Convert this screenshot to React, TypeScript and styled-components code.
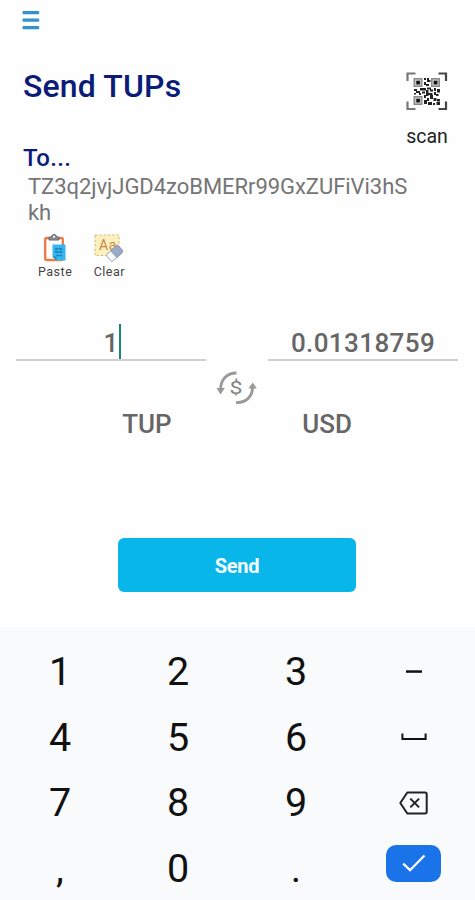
import React from "react";
import styled, { createGlobalStyle } from "styled-components";

const GlobalStyle = createGlobalStyle`
  *, *::before, *::after { box-sizing: border-box; }
  body { margin: 0; background: #fefefe; font-family: Roboto, "Liberation Sans", sans-serif; }
  button { border: 0; padding: 0; background: none; font: inherit; color: inherit; }
  svg { display: block; flex: none; }
`;

const Screen = styled.main`
  display: flex;
  flex-direction: column;
  width: 475px;
  height: 900px;
  overflow: hidden;
  background: #fefefe;
`;

const TopBar = styled.nav`
  height: 67px;
  padding: 10px 0 0 22px;
`;

const Header = styled.header`
  display: flex;
  justify-content: space-between;
  height: 107px;
  padding: 0 27px 0 23px;
`;

const Title = styled.h1`
  margin: 0;
  font-size: 32px;
  font-weight: 500;
  line-height: 38px;
  letter-spacing: 0.15px;
  color: #0b1c78;
`;

const Recipient = styled.h2`
  margin: 38px 0 0;
  font-size: 24px;
  font-weight: 500;
  line-height: 30px;
  letter-spacing: 0.3px;
  color: #0b1c78;
`;

const ScanButton = styled.button`
  display: flex;
  flex-direction: column;
  align-items: center;
  align-self: flex-start;
  gap: 14px;
  padding-top: 5px;
  font-size: 19.5px;
  line-height: 24px;
  color: #222;
`;

const Address = styled.p`
  width: 385px;
  height: 52px;
  margin: 0 0 0 28px;
  font-size: 22px;
  line-height: 26px;
  letter-spacing: -0.05px;
  color: #757575;
  word-break: break-all;
`;

const Tools = styled.div`
  display: flex;
  gap: 21px;
  height: 84px;
  padding: 7px 0 0 38px;
`;

const Tool = styled.button`
  display: flex;
  flex-direction: column;
  align-items: center;
  align-self: flex-start;
  gap: 2px;
  font-size: 12.5px;
  line-height: 16px;
  letter-spacing: 0.5px;
  color: #444;

  svg {
    margin-right: 2px;
  }
`;

const Converter = styled.section`
  display: grid;
  grid-template-columns: 190px 62px 190px;
  grid-template-rows: 51px 86px;
  height: 228px;
  padding: 0 16px;
`;

const Field = styled.div`
  display: flex;
  justify-content: center;
  height: 51px;
  padding-top: 15px;
  border-bottom: 2px solid #cfcfcf;
  font-size: 26px;
  font-weight: 500;
  line-height: 36px;
  letter-spacing: 0.4px;
  color: #666;
`;

const Caret = styled.span`
  width: 2px;
  height: 35px;
  margin: -1px -2px 0 0;
  background: #16866f;
`;

const SwapCell = styled.div`
  grid-column: 2;
  grid-row: 2;
  display: flex;
  justify-content: center;
  padding-top: 10px;
`;

const Unit = styled.div<{ $side: "left" | "right" }>`
  grid-column: ${(p) => (p.$side === "left" ? 1 : 3)};
  grid-row: 2;
  padding-top: 47px;
  padding-left: ${(p) => (p.$side === "left" ? "72px" : "0")};
  padding-right: ${(p) => (p.$side === "right" ? "72px" : "0")};
  text-align: center;
  font-size: 26px;
  font-weight: 500;
  line-height: 32px;
  color: #666;
`;

const SendButton = styled.button`
  align-self: center;
  width: 238px;
  height: 54px;
  margin-right: 1px;
  padding-top: 2px;
  border-radius: 6px;
  background: #09b6e9;
  color: #f4fcff;
  font-size: 20px;
  font-weight: 700;
  letter-spacing: -0.3px;
  line-height: 52px;
`;

const Keypad = styled.section`
  display: grid;
  grid-template-columns: repeat(4, 118px);
  grid-auto-rows: 65.6px;
  height: 273px;
  margin-top: auto;
  padding: 12px 0 0 1px;
  background: #f9fafc;
`;

const Key = styled.button`
  display: flex;
  align-items: center;
  justify-content: center;
  font-size: 39.5px;
  line-height: 65px;
  color: #111;
`;

const ConfirmKey = styled.span`
  display: flex;
  align-items: center;
  justify-content: center;
  width: 55px;
  height: 37px;
  margin: 0 1px 11px 0;
  border-radius: 10px;
  background: #1a73e8;
`;

const MenuIcon = () => (
  <svg width="18" height="21" viewBox="0 0 18 21" fill="#3093cc">
    <rect x="0.5" y="1" width="16.7" height="3.2" rx="0.8" />
    <rect x="0.5" y="8.6" width="16.7" height="3.2" rx="0.8" />
    <rect x="0.5" y="16.1" width="16.7" height="3.2" rx="0.8" />
  </svg>
);

const QrFinder = ({ x, y }: { x: number; y: number }) => (
  <g>
    <rect x={x + 0.7} y={y + 0.7} width="7.6" height="7.6" fill="#c4c4c4" stroke="#8a8a8a" strokeWidth="1.4" />
    <rect x={x + 2.8} y={y + 2.8} width="3.6" height="3.6" fill="#111" />
  </g>
);

const QrIcon = () => (
  <svg width="42" height="39" viewBox="0 0 42 39">
    <g fill="none" strokeWidth="2.2">
      <path d="M1.5 9V1.5H9.5M9.5 37H1.5V29.5" stroke="#777" />
      <path d="M32.5 1.5H40V9M40 29.5V37H32.5" stroke="#444" />
    </g>
    <QrFinder x={7.5} y={6} />
    <QrFinder x={25} y={6} />
    <QrFinder x={7.5} y={24} />
    <path
      d="M18 6h2v2h-2zM21 6h2v4h-2zM18 10h2v3h-2zM20 12h3v2h-3zM23 8h1.5v2H23z
         M8 17h3v2H8zM10 19h4v2h-4zM14 16h6v2.5h-6zM8 21h2v1.6H8zM16 19.5h3v2h-3zM13 21h2v2h-2z
         M21 15.5h4v2h-4zM20 18h2.5v6H20zM24 17.5h3v2h-3zM28 16h2v3h-2zM31 17h3v3.5h-3z
         M18 23h2v3h-2zM22.5 21h4v2h-4zM24 23h3v4h-3zM28 20h2v3h-2zM30 22h2.5v2H30z
         M18 28h3v4h-3zM21 26h2v3h-2zM22 30h4v3h-4zM27.5 26h3v3h-3zM31 27h3v2.5h-3zM27 31h2v2h-2zM30.5 30h3.5v3h-3.5z"
      fill="#222"
    />
  </svg>
);

const PasteIcon = () => (
  <svg width="27" height="29" viewBox="0 0 27 29">
    <rect x="4.2" y="5" width="17.6" height="22" rx="1.5" fill="#fff" stroke="#ef7b4b" strokeWidth="2.4" />
    <path d="M8 7V4.2H10.3C10.3 .6 15.7 .6 15.7 4.2H18V7Z" fill="#8b8d91" stroke="#66696d" />
    <circle cx="13" cy="3.8" r="1" fill="#fff" />
    <path d="M11.5 11.5H24.5V27.5H15.5L11.5 23.5Z" fill="#35b7ee" />
    <path d="M14 16H22M14 19H22M15.5 22.5H21" stroke="#1676af" strokeWidth="1.3" strokeDasharray="3 .7" />
    <path d="M11.5 23.5H15.5V27.5Z" fill="#168fcb" />
  </svg>
);

const ClearIcon = () => (
  <svg width="30" height="29" viewBox="0 0 30 29">
    <rect x="2" y="2" width="24" height="20.5" fill="#fcefc0" stroke="#d9bf72" strokeWidth="1.2" strokeDasharray="2.5 1.8" />
    <text x="6" y="16.5" fontFamily="Roboto, sans-serif" fontSize="14" fill="#c88b43">Aa</text>
    <g transform="rotate(-42 21.5 20.5)" stroke="#8395b4" strokeWidth=".8">
      <rect x="14" y="16" width="15.5" height="9" rx="1.5" fill="#f8faff" />
      <path d="M20.5 16H28Q29.5 16 29.5 17.5V23.5Q29.5 25 28 25H20.5Z" fill="#9ba9c3" />
    </g>
  </svg>
);

const SwapIcon = () => (
  <svg width="42" height="34" viewBox="0 0 42 34">
    <g fill="none" stroke="#999" strokeWidth="2.8">
      <path d="M20.5 2C10.5 2 5 8.5 4.5 18" />
      <path d="M20 31.5C30.5 32 36.5 25 36.5 16.5" />
    </g>
    <path d="M0.4 17H8.8L4.6 23.5ZM32.5 17.5H40.8L36.6 11.5Z" fill="#999" />
    <text x="13.4" y="23" textLength="13" lengthAdjust="spacingAndGlyphs" fontFamily="Roboto, sans-serif" fontSize="18" fill="#858585">$</text>
  </svg>
);

const MinusIcon = () => (
  <svg width="16" height="3" viewBox="0 0 16 3">
    <rect y="0.3" width="16" height="2.5" fill="#111" />
  </svg>
);

const SpaceIcon = () => (
  <svg width="26" height="8" viewBox="0 0 26 8">
    <path d="M1.4 0.5V6H24.6V0.5" fill="none" stroke="#111" strokeWidth="2" />
  </svg>
);

const BackspaceIcon = () => (
  <svg width="30" height="24" viewBox="0 0 30 24" fill="none" stroke="#222" strokeWidth="2">
    <path d="M8.3 1.5H26Q27.7 1.5 27.7 3.2V20.8Q27.7 22.5 26 22.5H8.3L1.3 12Z" strokeLinejoin="round" />
    <path d="M11.3 7.6L20.1 16.4M20.1 7.6L11.3 16.4" />
  </svg>
);

const CheckIcon = () => (
  <svg width="24" height="18" viewBox="0 0 24 18">
    <path d="M1.2 9.7L8 16.2L22.5 1.5" fill="none" stroke="#fff" strokeWidth="2.3" />
  </svg>
);

const KEYS: { id: string; face: React.ReactNode }[] = [
  { id: "1", face: "1" },
  { id: "2", face: "2" },
  { id: "3", face: "3" },
  { id: "minus", face: <MinusIcon /> },
  { id: "4", face: "4" },
  { id: "5", face: "5" },
  { id: "6", face: "6" },
  { id: "space", face: <SpaceIcon /> },
  { id: "7", face: "7" },
  { id: "8", face: "8" },
  { id: "9", face: "9" },
  { id: "backspace", face: <BackspaceIcon /> },
  { id: "comma", face: "," },
  { id: "0", face: "0" },
  { id: "period", face: "." },
  { id: "confirm", face: <ConfirmKey><CheckIcon /></ConfirmKey> },
];

export default function App() {
  return (
    <Screen>
      <GlobalStyle />
      <TopBar>
        <MenuIcon />
      </TopBar>
      <Header>
        <div>
          <Title>Send TUPs</Title>
          <Recipient>To...</Recipient>
        </div>
        <ScanButton>
          <QrIcon />
          scan
        </ScanButton>
      </Header>
      <Address>TZ3q2jvjJGD4zoBMERr99GxZUFiVi3hSkh</Address>
      <Tools>
        <Tool>
          <PasteIcon />
          Paste
        </Tool>
        <Tool>
          <ClearIcon />
          Clear
        </Tool>
      </Tools>
      <Converter>
        <Field>
          1<Caret />
        </Field>
        <span />
        <Field>0.01318759</Field>
        <Unit $side="left">TUP</Unit>
        <SwapCell>
          <SwapIcon />
        </SwapCell>
        <Unit $side="right">USD</Unit>
      </Converter>
      <SendButton>Send</SendButton>
      <Keypad>
        {KEYS.map((key) => (
          <Key key={key.id}>{key.face}</Key>
        ))}
      </Keypad>
    </Screen>
  );
}
